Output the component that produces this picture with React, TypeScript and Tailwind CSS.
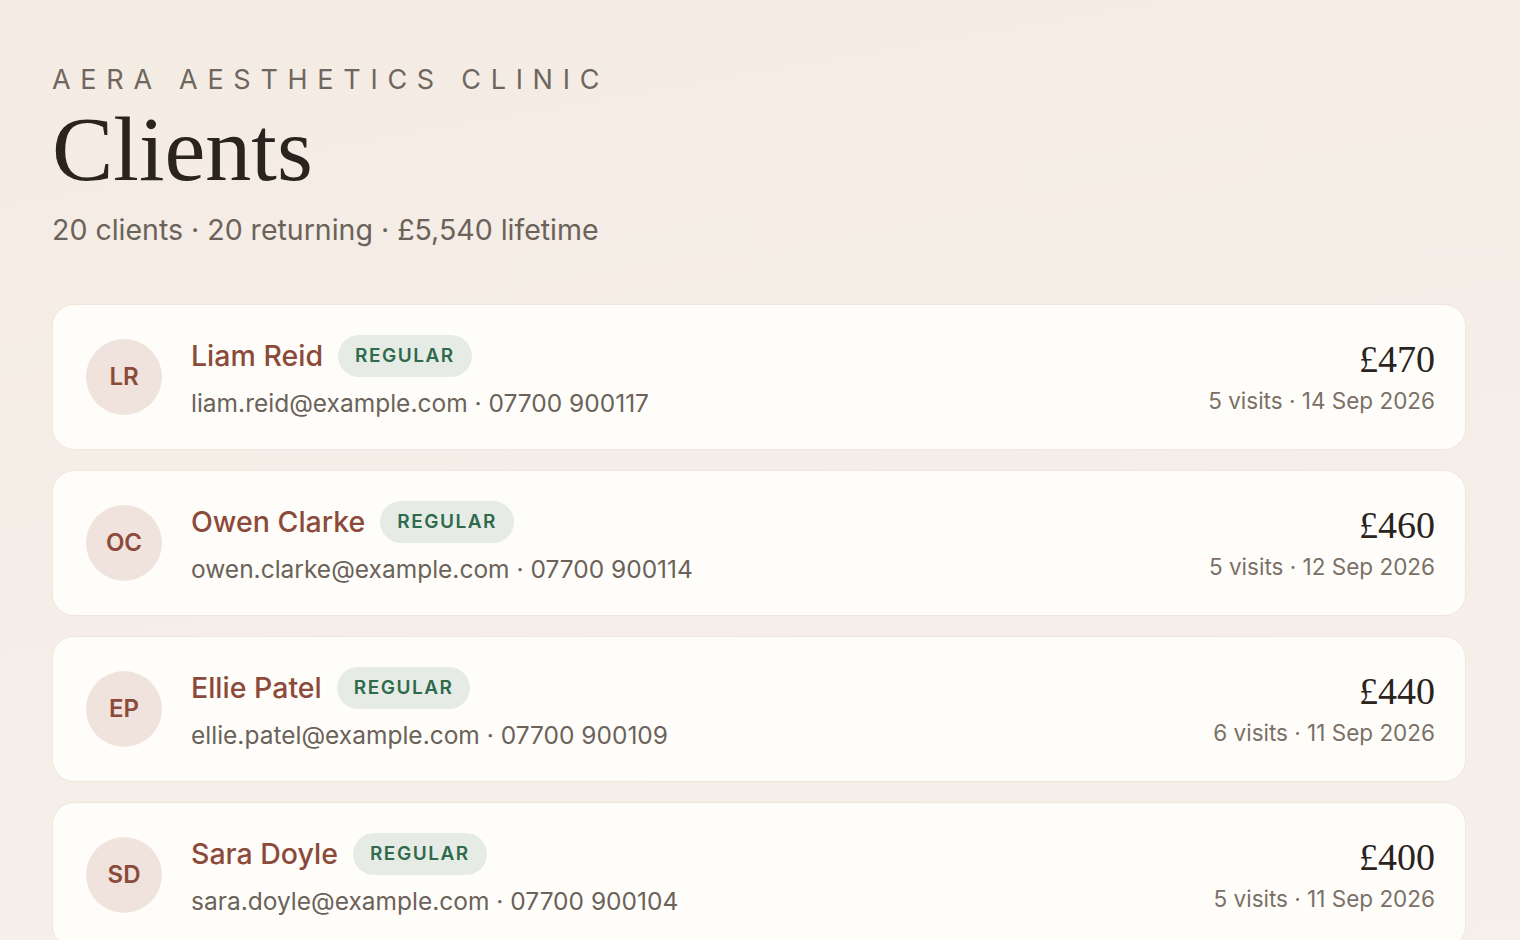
const clients = [
  { initials: "LR", name: "Liam Reid", email: "liam.reid@example.com", phone: "07700 900117", total: "£470", visits: 5, last: "14 Sep 2026" },
  { initials: "OC", name: "Owen Clarke", email: "owen.clarke@example.com", phone: "07700 900114", total: "£460", visits: 5, last: "12 Sep 2026" },
  { initials: "EP", name: "Ellie Patel", email: "ellie.patel@example.com", phone: "07700 900109", total: "£440", visits: 6, last: "11 Sep 2026" },
  { initials: "SD", name: "Sara Doyle", email: "sara.doyle@example.com", phone: "07700 900104", total: "£400", visits: 5, last: "11 Sep 2026" },
];

const sans = "font-['Inter',sans-serif]";
const serif = "font-['Liberation_Serif',serif]";

export default function App() {
  return (
    <div className="min-h-screen w-full overflow-hidden bg-[linear-gradient(170deg,#f4ece3_0%,#f5eee8_50%,#f6f0ec_100%)]">
      <div className="px-[52px] pt-[63px]">
        <p className={`${sans} text-[27px] leading-[34px] tracking-[0.36em] text-[#6f665e]`}>
          AERA AESTHETICS CLINIC
        </p>
        <h1 className={`${serif} mt-[4px] text-[92px] leading-[96px] text-[#2a231e]`}>Clients</h1>
        <p className={`${sans} mt-[15px] text-[28.5px] leading-[36px] text-[#6b625a]`}>
          20 clients · 20 returning · £5,540 lifetime
        </p>

        <div className="mt-[56px] flex flex-col gap-[20px] pr-[2px]">
          {clients.map((c) => (
            <div
              key={c.initials}
              className="flex items-center rounded-[22px] border border-[#efe7de] bg-[#fffdf9] py-[30px] pl-[33px] pr-[30px]"
            >
              <div
                className={`${sans} flex h-[76px] w-[76px] shrink-0 items-center justify-center rounded-full bg-[#f0e3dd] text-[24px] font-semibold text-[#8b4a3a]`}
              >
                {c.initials}
              </div>
              <div className="ml-[29px] flex flex-1 flex-col">
                <div className="flex items-center gap-[15px]">
                  <span className={`${sans} text-[28.5px] leading-[42px] font-medium text-[#8b4a3a]`}>{c.name}</span>
                  <span
                    className={`${sans} rounded-full bg-[#e6ece5] px-[17px] text-[19px] leading-[42px] font-semibold tracking-[0.08em] text-[#2f6a4d]`}
                  >
                    REGULAR
                  </span>
                </div>
                <p className={`${sans} mt-[10px] text-[24.5px] leading-[32px] text-[#6b625a]`}>
                  {c.email} · {c.phone}
                </p>
              </div>
              <div className="flex flex-col items-end">
                <span className={`${serif} text-[38px] leading-[42px] text-[#2a231e]`}>{c.total}</span>
                <span className={`${sans} mt-[6px] text-[22.5px] leading-[30px] text-[#7a7068]`}>
                  {c.visits} visits · {c.last}
                </span>
              </div>
            </div>
          ))}
        </div>
      </div>
    </div>
  );
}
